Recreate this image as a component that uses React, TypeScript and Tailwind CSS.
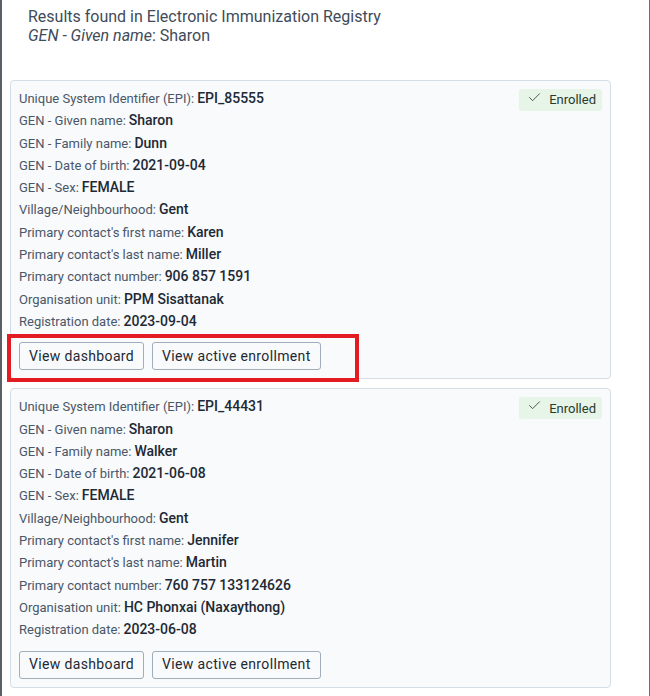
import { Check } from "lucide-react";

type Field = { label: string; value: string };

const records: Field[][] = [
    [
        { label: "Unique System Identifier (EPI)", value: "EPI_85555" },
        { label: "GEN - Given name", value: "Sharon" },
        { label: "GEN - Family name", value: "Dunn" },
        { label: "GEN - Date of birth", value: "2021-09-04" },
        { label: "GEN - Sex", value: "FEMALE" },
        { label: "Village/Neighbourhood", value: "Gent" },
        { label: "Primary contact's first name", value: "Karen" },
        { label: "Primary contact's last name", value: "Miller" },
        { label: "Primary contact number", value: "906 857 1591" },
        { label: "Organisation unit", value: "PPM Sisattanak" },
        { label: "Registration date", value: "2023-09-04" },
    ],
    [
        { label: "Unique System Identifier (EPI)", value: "EPI_44431" },
        { label: "GEN - Given name", value: "Sharon" },
        { label: "GEN - Family name", value: "Walker" },
        { label: "GEN - Date of birth", value: "2021-06-08" },
        { label: "GEN - Sex", value: "FEMALE" },
        { label: "Village/Neighbourhood", value: "Gent" },
        { label: "Primary contact's first name", value: "Jennifer" },
        { label: "Primary contact's last name", value: "Martin" },
        { label: "Primary contact number", value: "760 757 133124626" },
        { label: "Organisation unit", value: "HC Phonxai (Naxaythong)" },
        { label: "Registration date", value: "2023-06-08" },
    ],
];

function ResultCard({ fields }: { fields: Field[] }) {
    return (
        <div className="relative rounded-[4px] border border-[#d5dde5] bg-[#f8fafc] pl-[8px] pr-[8px] pt-[6px] pb-[8px]">
            <span className="absolute right-[8px] top-[8px] flex h-[22px] items-center gap-[7px] rounded-[3px] bg-[#e7f4e8] pl-[8px] pr-[6px] text-[13px] text-[#2a3a2c]">
                <Check size={15} strokeWidth={1.3} className="-mt-[5px]" />
                Enrolled
            </span>
            {fields.map((f) => (
                <div key={f.label} className="flex h-[22.3px] items-baseline gap-[3px] whitespace-nowrap">
                    <span className="text-[13px] leading-[22.3px] text-[#4a5768]">{f.label}:</span>
                    <span className="text-[14px] leading-[22.3px] font-medium text-[#212934]">{f.value}</span>
                </div>
            ))}
            <div className="mt-[10px] flex gap-[8px]">
                <button className="h-[28px] rounded-[3px] border border-[#a0adba] bg-[#f9fafb] px-[9px] text-[14px] tracking-[0.35px] text-[#212934]">
                    View dashboard
                </button>
                <button className="h-[28px] rounded-[3px] border border-[#a0adba] bg-[#f9fafb] px-[9px] text-[14px] tracking-[0.35px] text-[#212934]">
                    View active enrollment
                </button>
            </div>
        </div>
    );
}

export default function App() {
    return (
        <div
            className="relative h-[696px] w-[650px] overflow-hidden border-l-2 border-r border-l-[#5b5f66] border-r-[#6b6f75] bg-white"
            style={{ fontFamily: "Roboto, 'Liberation Sans', sans-serif" }}
        >
            <div className="pl-[26px] pt-[7px] text-[16px] leading-[19px] text-[#404b5a]">
                <div>Results found in Electronic Immunization Registry</div>
                <div>
                    <i>GEN - Given name</i>: Sharon
                </div>
            </div>
            <div className="ml-[8px] mr-[38px] mt-[35px] flex flex-col gap-[9px]">
                {records.map((r, i) => (
                    <ResultCard key={i} fields={r} />
                ))}
            </div>
            <div className="absolute left-[5px] top-[334px] h-[48px] w-[352px] border-4 border-[#e31b23]" />
        </div>
    );
}
